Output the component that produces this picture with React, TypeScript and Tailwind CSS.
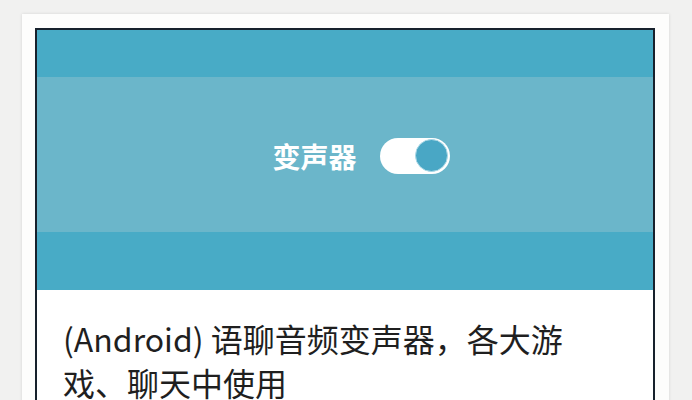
export default function App() {
  return (
    <div className="w-[692px] h-[400px] overflow-hidden bg-[#f1f1f0] pt-[14px] pl-[22px]">
      <div className="w-[647px] h-[420px] bg-[#fdfdfc] pt-[14px] pl-[13px] shadow-[0_0_3px_rgba(0,0,0,0.12)]">
        <div className="w-[620px] h-[420px] border-t-[2px] border-l-[2px] border-r-[2px] border-[#17212c] bg-white">
          <div className="h-[47px] bg-[#48abc6]" />
          <div className="h-[155px] bg-[#6bb6ca] flex items-center justify-center pl-[32px] pt-[2px]">
            <span
              className="text-white font-bold text-[28px] leading-none"
              style={{ fontFamily: '"Noto Sans CJK SC", sans-serif' }}
            >
              变声器
            </span>
            <div className="ml-[23px] w-[70px] h-[36px] rounded-full bg-white flex items-center justify-end pr-[2px]">
              <div className="w-[33px] h-[33px] rounded-full bg-[#49a7c5] border border-[#a9d8e6]" />
            </div>
          </div>
          <div className="h-[58px] bg-[#48abc6]" />
          <div
            className="pt-[26px] pl-[26px] pr-[30px] text-[32px] leading-[44px] text-[#1f1f1f]"
            style={{ fontFamily: '"Noto Sans CJK SC", sans-serif' }}
          >
            (Android) 语聊音频变声器，各大游
            <br />
            戏、聊天中使用
          </div>
        </div>
      </div>
    </div>
  );
}
